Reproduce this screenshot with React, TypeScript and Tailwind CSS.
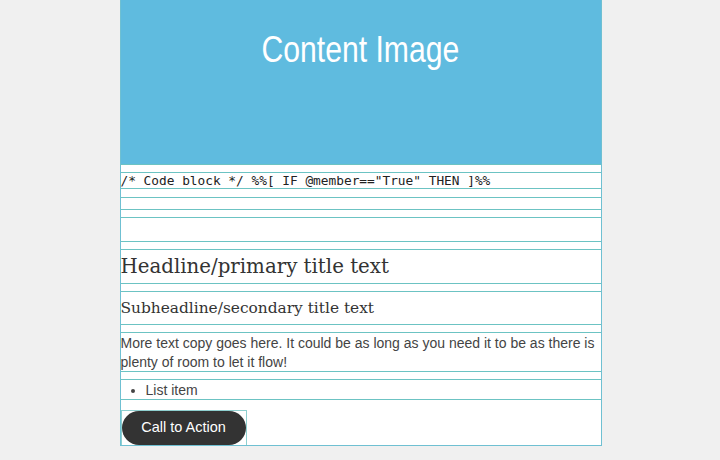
import React from 'react';

const line = 'border-b border-[#6cc3c3]';

const Spacer: React.FC<{ h: string }> = ({ h }) => <div className={`${h} ${line}`} />;

export default function App() {
  return (
    <div className="min-h-[460px] w-full bg-[#f0f0f0] flex justify-center">
      <div className="w-[482px] ml-[1px] bg-white border-x border-[#6fc0d2] flex flex-col h-[446px] border-b">
        {/* Image block */}
        <div className={`h-[166px] bg-[#5fbbdf] ${line} flex justify-center`}>
          <span className="pt-[28px] text-[37px] leading-[44px] text-white font-['Liberation_Sans',sans-serif] scale-x-[0.815] whitespace-nowrap">
            Content Image
          </span>
        </div>
        <Spacer h="h-[8px]" />

        {/* Code block */}
        <div className={`h-[16px] ${line} font-['DejaVu_Sans_Mono',monospace] text-[12.8px] leading-[15px] text-[#222] whitespace-pre`}>
          {'/* Code block */ %%[ IF @member=="True" THEN ]%%'}
        </div>
        <Spacer h="h-[9px]" />
        <Spacer h="h-[12px]" />
        <Spacer h="h-[8px]" />
        <Spacer h="h-[24px]" />
        <Spacer h="h-[8px]" />

        {/* Headline */}
        <div className={`h-[35px] ${line} flex items-center font-['DejaVu_Serif',serif] text-[19.8px] text-[#333]`}>
          Headline/primary title text
        </div>
        <Spacer h="h-[8px]" />

        {/* Subheadline */}
        <div className={`h-[33px] ${line} flex items-center font-['DejaVu_Serif',serif] text-[15.4px] text-[#333]`}>
          Subheadline/secondary title text
        </div>
        <Spacer h="h-[8px]" />

        {/* Paragraph */}
        <div className={`h-[39px] ${line} pt-[1px] font-['Liberation_Sans',sans-serif] text-[14px] leading-[19px] text-[#444]`}>
          More text copy goes here. It could be as long as you need it to be as there is plenty of room to let it flow!
        </div>
        <Spacer h="h-[8px]" />

        {/* List */}
        <div className={`h-[20px] ${line} font-['Liberation_Sans',sans-serif] text-[14px] leading-[20px] text-[#444]`}>
          <ul className="list-disc pl-[25px]">
            <li>List item</li>
          </ul>
        </div>
        <div className="h-[10px]" />

        {/* Button */}
        <div className="flex">
          <div className="border border-b-0 border-[#8fd0d0] w-[126px] h-[35px]">
            <button className="h-[34px] w-[124px] rounded-full bg-[#333] text-white font-['Liberation_Sans',sans-serif] text-[14.5px]">
              Call to Action
            </button>
          </div>
        </div>
      </div>
    </div>
  );
}
